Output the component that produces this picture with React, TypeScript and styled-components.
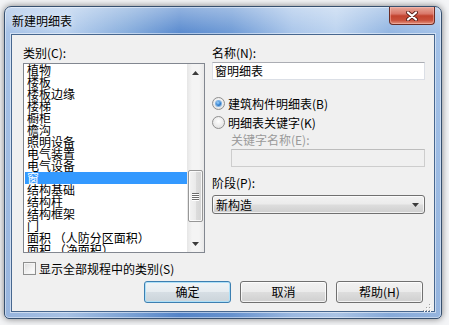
import styled, { createGlobalStyle } from "styled-components";

const GlobalStyle = createGlobalStyle`
  html, body {
    margin: 0;
    padding: 0;
  }
  body {
    width: 449px;
    height: 325px;
    overflow: hidden;
    background: #f4f5f7;
    font-family: "Noto Sans CJK SC", "Liberation Sans", sans-serif;
    font-size: 12px;
    color: #000;
  }
`;

const Desktop = styled.div`
  width: 449px;
  height: 325px;
  box-sizing: border-box;
  padding: 6px 0 0 4px;
`;

const Window = styled.div`
  width: 438px;
  height: 313px;
  box-sizing: border-box;
  border: 1px solid #37506f;
  border-radius: 7px 7px 5px 5px;
  padding: 0 6px 6px 6px;
  display: flex;
  flex-direction: column;
  background:
    linear-gradient(180deg, rgba(255, 255, 255, 0.35) 0px, rgba(255, 255, 255, 0) 26px, rgba(40, 80, 150, 0.12) 100%),
    linear-gradient(90deg, #a6c2e7 0%, #b8d0ee 14%, #88aedd 28%, #5a8bcf 40%, #6f9bd6 52%, #aac6ea 66%, #bcd3ef 76%, #93b6e2 88%, #a4c2e8 100%);
  box-shadow: 0 0 7px rgba(0, 0, 0, 0.5), inset 0 0 0 1px rgba(255, 255, 255, 0.45);
`;

const TitleBar = styled.div`
  height: 27px;
  display: flex;
  justify-content: space-between;
  align-items: flex-start;
`;

const Title = styled.div`
  padding: 7px 0 0 1px;
  line-height: 14px;
  font-size: 12px;
  color: #000;
  text-shadow: 0 0 6px rgba(255, 255, 255, 0.9);
`;

const CloseButton = styled.div`
  width: 46px;
  height: 18px;
  box-sizing: border-box;
  border: 1px solid #6b2c24;
  border-top: none;
  border-radius: 0 0 4px 4px;
  display: flex;
  align-items: center;
  justify-content: center;
  background: linear-gradient(180deg, #e9a99a 0%, #d9776a 40%, #c2432f 52%, #c9503b 78%, #e39580 100%);
  box-shadow: inset 0 0 0 1px rgba(255, 200, 190, 0.45);
`;

const Client = styled.div`
  position: relative;
  flex: 1;
  box-sizing: border-box;
  border: 1px solid #47678f;
  background: #f0f0f0;
  padding: 11px 9px 0 11px;
  display: flex;
  flex-direction: column;
  box-shadow: 0 0 0 1px rgba(255, 255, 255, 0.5);
`;

const Columns = styled.div`
  display: grid;
  grid-template-columns: 182px 213px;
  column-gap: 7px;
`;

const Column = styled.div`
  display: flex;
  flex-direction: column;
`;

const Label = styled.div<{ $disabled?: boolean; $indent?: number; $top?: number }>`
  line-height: 14px;
  height: 14px;
  white-space: nowrap;
  color: ${(p) => (p.$disabled ? "#9a9a9a" : "#000")};
  margin-left: ${(p) => p.$indent ?? 0}px;
  margin-top: ${(p) => p.$top ?? 0}px;
`;

const ListBox = styled.div`
  margin-top: 3px;
  height: 190px;
  box-sizing: border-box;
  border: 1px solid #828790;
  background: #fff;
  display: flex;
`;

const Items = styled.div`
  flex: 1;
  overflow: hidden;
  padding-left: 1px;
`;

const Item = styled.div<{ $selected?: boolean }>`
  height: 12px;
  line-height: 12px;
  padding-left: 2px;
  white-space: nowrap;
  background: ${(p) => (p.$selected ? "#3399ff" : "transparent")};
  color: ${(p) => (p.$selected ? "#fff" : "#000")};
`;

const ScrollBar = styled.div`
  width: 17px;
  display: flex;
  flex-direction: column;
  background: linear-gradient(90deg, #e6e6e6 0%, #f4f4f4 30%, #f4f4f4 70%, #e9e9e9 100%);
`;

const ArrowButton = styled.div`
  height: 17px;
  display: flex;
  align-items: center;
  justify-content: center;
`;

const Track = styled.div`
  flex: 1;
  display: flex;
  flex-direction: column;
  align-items: center;
`;

const Thumb = styled.div`
  width: 15px;
  height: 52px;
  box-sizing: border-box;
  border: 1px solid #979797;
  border-radius: 2px;
  background: linear-gradient(90deg, #f3f3f3 0%, #eaeaea 50%, #dcdcdc 55%, #d4d4d4 100%);
  box-shadow: inset 0 0 0 1px rgba(255, 255, 255, 0.8);
  display: flex;
  flex-direction: column;
  align-items: center;
  justify-content: center;
  gap: 1px;
`;

const GripLine = styled.div`
  width: 7px;
  height: 1px;
  background: #6b6b6b;
  box-shadow: 0 1px 0 #fff;
`;

const TextBox = styled.div<{ $disabled?: boolean; $indent?: number }>`
  margin-top: 2px;
  margin-left: ${(p) => p.$indent ?? 0}px;
  height: 18px;
  box-sizing: border-box;
  border: 1px solid ${(p) => (p.$disabled ? "#cdcdcd" : "#dbdfe6")};
  border-top-color: ${(p) => (p.$disabled ? "#bdbdbd" : "#abadb3")};
  background: ${(p) => (p.$disabled ? "#f0f0f0" : "#fff")};
  padding-left: 2px;
  line-height: 16px;
`;

const RadioRow = styled.label<{ $top: number }>`
  margin-top: ${(p) => p.$top}px;
  height: 16px;
  display: flex;
  align-items: center;
  gap: 3px;
  white-space: nowrap;
`;

const Radio = styled.span<{ $checked?: boolean }>`
  width: 13px;
  height: 13px;
  box-sizing: border-box;
  border-radius: 50%;
  border: 1px solid #8f8f8f;
  background: radial-gradient(circle at 50% 40%, #ffffff 0%, #e6e6e6 70%, #d2d2d2 100%);
  display: flex;
  align-items: center;
  justify-content: center;
  &::after {
    content: "";
    width: 5px;
    height: 5px;
    border-radius: 50%;
    display: ${(p) => (p.$checked ? "block" : "none")};
    background: radial-gradient(circle at 40% 35%, #9ed4ff 0%, #2f7fd0 55%, #164e8e 100%);
    box-shadow: 0 0 0 1px #7fb2e3;
  }
`;

const Select = styled.div`
  margin-top: 5px;
  height: 19px;
  box-sizing: border-box;
  border: 1px solid #707070;
  border-radius: 3px;
  background: linear-gradient(180deg, #f2f2f2 0%, #ebebeb 48%, #dddddd 52%, #cfcfcf 100%);
  box-shadow: inset 0 0 0 1px rgba(255, 255, 255, 0.7);
  display: flex;
  align-items: center;
  justify-content: space-between;
  padding: 0 5px 0 3px;
  line-height: 17px;
`;

const CheckRow = styled.label`
  margin-top: 9px;
  height: 13px;
  display: flex;
  align-items: center;
  gap: 3px;
  line-height: 13px;
  white-space: nowrap;
`;

const CheckBox = styled.span`
  width: 13px;
  height: 13px;
  box-sizing: border-box;
  border: 1px solid #8e8f8f;
  background: linear-gradient(135deg, #dcdcdc 0%, #f4f4f4 60%, #ffffff 100%);
  box-shadow: inset 0 0 0 1px #f4f4f4;
`;

const ButtonRow = styled.div`
  margin-top: 6px;
  margin-right: 2px;
  display: flex;
  justify-content: flex-end;
  gap: 9px;
`;

const Button = styled.div<{ $default?: boolean }>`
  width: 87px;
  height: 22px;
  box-sizing: border-box;
  border: 1px solid ${(p) => (p.$default ? "#3c7fb1" : "#707070")};
  border-radius: 3px;
  background: ${(p) =>
    p.$default
      ? "linear-gradient(180deg, #f0f4f7 0%, #e6ecf0 48%, #d6dee4 52%, #cbd4da 100%)"
      : "linear-gradient(180deg, #f2f2f2 0%, #ebebeb 48%, #dddddd 52%, #cfcfcf 100%)"};
  box-shadow: inset 0 0 0 1px ${(p) => (p.$default ? "#aee0f8" : "rgba(255, 255, 255, 0.75)")};
  display: flex;
  align-items: center;
  justify-content: center;
  line-height: 20px;
`;

const SizeGrip = styled.div`
  position: absolute;
  right: 2px;
  bottom: 2px;
  width: 10px;
  height: 10px;
`;

const categories = [
  "植物",
  "楼板",
  "楼板边缘",
  "楼梯",
  "橱柜",
  "檐沟",
  "照明设备",
  "电气装置",
  "电气设备",
  "窗",
  "结构基础",
  "结构柱",
  "结构框架",
  "门",
  "面积 （人防分区面积）",
  "面积 （净面积）",
];

const Triangle = ({ up }: { up?: boolean }) => (
  <svg width="7" height="4" viewBox="0 0 7 4">
    <path d={up ? "M0 4 L3.5 0 L7 4 Z" : "M0 0 L7 0 L3.5 4 Z"} fill="#3b3b3b" />
  </svg>
);

function App() {
  const selected = "窗";
  const thumbOffset = 89;

  return (
    <>
      <GlobalStyle />
      <Desktop>
        <Window>
          <TitleBar>
            <Title>新建明细表</Title>
            <CloseButton>
              <svg width="12" height="10" viewBox="0 0 12 10">
                <path d="M2 1.5 L10 8.5 M10 1.5 L2 8.5" stroke="#5a2019" strokeWidth="4" strokeLinecap="round" />
                <path d="M2 1.5 L10 8.5 M10 1.5 L2 8.5" stroke="#ffffff" strokeWidth="2.2" strokeLinecap="round" />
              </svg>
            </CloseButton>
          </TitleBar>
          <Client>
            <Columns>
              <Column>
                <Label>类别(C):</Label>
                <ListBox>
                  <Items>
                    {categories.map((c) => (
                      <Item key={c} $selected={c === selected}>
                        {c}
                      </Item>
                    ))}
                  </Items>
                  <ScrollBar>
                    <ArrowButton>
                      <Triangle up />
                    </ArrowButton>
                    <Track>
                      <Thumb style={{ marginTop: thumbOffset }}>
                        <GripLine />
                        <GripLine />
                        <GripLine />
                        <GripLine />
                      </Thumb>
                    </Track>
                    <ArrowButton>
                      <Triangle />
                    </ArrowButton>
                  </ScrollBar>
                </ListBox>
              </Column>
              <Column>
                <Label>名称(N):</Label>
                <TextBox>窗明细表</TextBox>
                <RadioRow $top={15}>
                  <Radio $checked />
                  建筑构件明细表(B)
                </RadioRow>
                <RadioRow $top={3}>
                  <Radio />
                  明细表关键字(K)
                </RadioRow>
                <Label $disabled $indent={19} $top={3}>
                  关键字名称(E):
                </Label>
                <TextBox $disabled $indent={19} />
                <Label $top={9}>阶段(P):</Label>
                <Select>
                  <span>新构造</span>
                  <Triangle />
                </Select>
              </Column>
            </Columns>
            <CheckRow>
              <CheckBox />
              显示全部规程中的类别(S)
            </CheckRow>
            <ButtonRow>
              <Button $default>确定</Button>
              <Button>取消</Button>
              <Button>帮助(H)</Button>
            </ButtonRow>
            <SizeGrip>
              <svg width="10" height="10" viewBox="0 0 10 10">
                {[
                  [8, 2],
                  [5, 5],
                  [8, 5],
                  [2, 8],
                  [5, 8],
                  [8, 8],
                ].map(([x, y]) => (
                  <g key={`${x}-${y}`}>
                    <rect x={x} y={y} width="1" height="1" fill="#fff" />
                    <rect x={x - 1} y={y - 1} width="1" height="1" fill="#a0a0a0" />
                  </g>
                ))}
              </svg>
            </SizeGrip>
          </Client>
        </Window>
      </Desktop>
    </>
  );
}

export default App;
